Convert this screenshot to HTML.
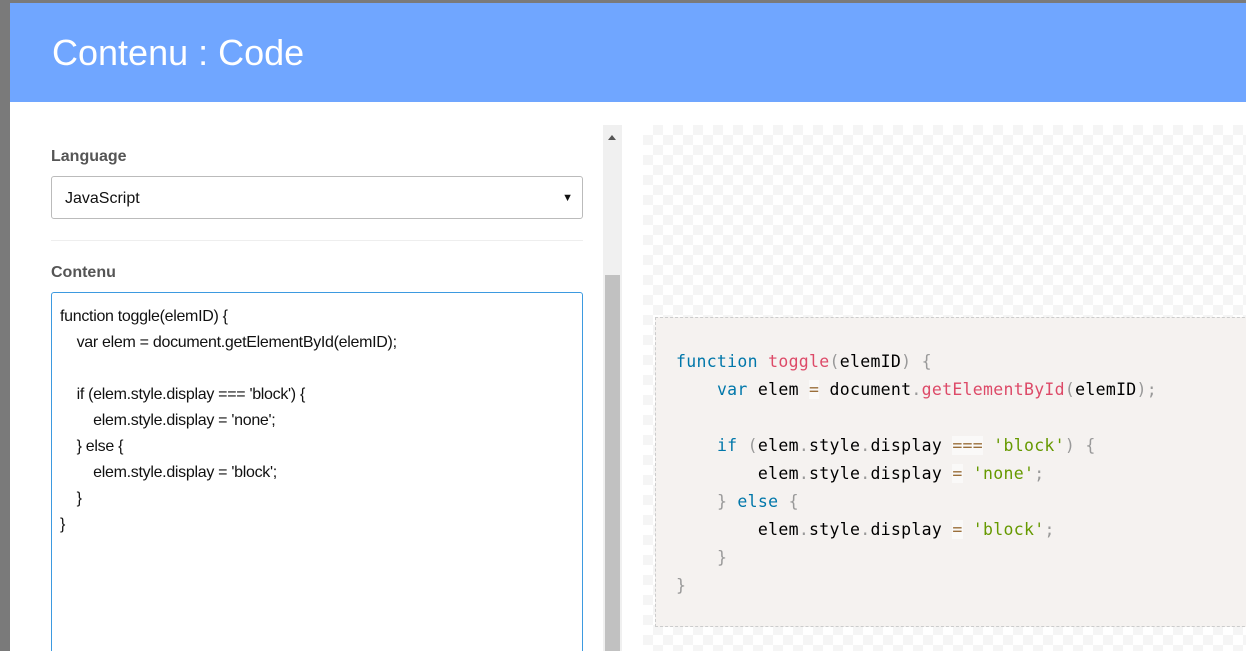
<!DOCTYPE html>
<html><head><meta charset="utf-8"><style>
body{margin:0;width:1246px;height:651px;overflow:hidden;background:#7a7a7a;font-family:"Liberation Sans",Arial,sans-serif;position:relative}
.modal{position:absolute;left:10px;top:3px;width:1236px;height:648px;background:#fff;overflow:hidden}
.hdr{height:99px;background:#70a6ff;color:#fff;font-size:36px;line-height:99px;padding-left:42px}
.lbl{position:absolute;left:41px;font-size:16px;font-weight:bold;color:#555}
.sel{position:absolute;left:41px;top:173px;width:530px;height:43px;border:1px solid #bbb;border-radius:3px;font-size:16px;line-height:43px;padding-left:13px;box-sizing:border-box;width:532px;color:#111}
.sel span{position:absolute;right:9px;top:0;font-size:11px}
.hr{position:absolute;left:41px;top:237px;width:532px;height:1px;background:#eee}
.ta{position:absolute;left:41px;top:289px;width:532px;height:380px;border:1px solid #3d9ae0;border-radius:3px;box-sizing:border-box;padding:11px 8px;font-size:16px;line-height:26px;color:#111;white-space:pre;letter-spacing:-0.3px}
.sb{position:absolute;left:593px;top:122px;width:19px;height:530px;background:#f0f0f0}
.sb .th{position:absolute;left:2px;top:150px;width:15px;height:400px;background:#c1c1c1}
.sb .ar{position:absolute;left:5px;top:10px;width:0;height:0;border-left:4px solid transparent;border-right:4px solid transparent;border-bottom:5px solid #555}
.chk{position:absolute;left:633px;top:122px;width:620px;height:530px;background-color:#fff;background-image:linear-gradient(45deg,#f5f5f5 25%,transparent 25%,transparent 75%,#f5f5f5 75%),linear-gradient(45deg,#f5f5f5 25%,transparent 25%,transparent 75%,#f5f5f5 75%);background-size:20px 20px;background-position:0 0,10px 10px}
.code{position:absolute;left:645px;top:314px;width:620px;height:310px;border:1px dashed #ccc;box-sizing:border-box;background:#f5f2f0}
pre{margin:0;position:absolute;left:20px;top:30px;font-family:"DejaVu Sans Mono","Liberation Mono",monospace;font-size:16.5px;line-height:28px;color:#000;letter-spacing:0.3px}
.k{color:#07a}.f{color:#dd4a68}.p{color:#999}.s{color:#690}.o{color:#9a6e3a;background:rgba(255,255,255,.5)}
</style></head><body>
<div class="modal">
<div class="hdr">Contenu : Code</div>
<div class="lbl" style="top:145px">Language</div>
<div class="sel">JavaScript<span>▼</span></div>
<div class="hr"></div>
<div class="lbl" style="top:261px">Contenu</div>
<div class="ta">function toggle(elemID) {
    var elem = document.getElementById(elemID);

    if (elem.style.display === 'block') {
        elem.style.display = 'none';
    } else {
        elem.style.display = 'block';
    }
}</div>
<div class="sb"><div class="ar"></div><div class="th"></div></div>
<div class="chk"></div>
<div class="code"><pre><span class="k">function</span> <span class="f">toggle</span><span class="p">(</span>elemID<span class="p">)</span> <span class="p">{</span>
    <span class="k">var</span> elem <span class="o">=</span> document<span class="p">.</span><span class="f">getElementById</span><span class="p">(</span>elemID<span class="p">);</span>

    <span class="k">if</span> <span class="p">(</span>elem<span class="p">.</span>style<span class="p">.</span>display <span class="o">===</span> <span class="s">'block'</span><span class="p">)</span> <span class="p">{</span>
        elem<span class="p">.</span>style<span class="p">.</span>display <span class="o">=</span> <span class="s">'none'</span><span class="p">;</span>
    <span class="p">}</span> <span class="k">else</span> <span class="p">{</span>
        elem<span class="p">.</span>style<span class="p">.</span>display <span class="o">=</span> <span class="s">'block'</span><span class="p">;</span>
    <span class="p">}</span>
<span class="p">}</span></pre></div>
</div>
</body></html>
